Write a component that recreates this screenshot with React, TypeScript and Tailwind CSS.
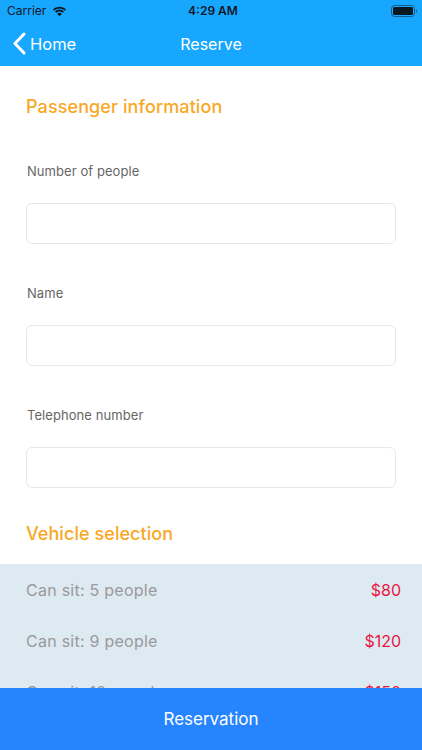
const font = { fontFamily: '"Inter", "Noto Sans", sans-serif' };

function Field({ label, top }: { label: string; top: string }) {
  return (
    <div className={top}>
      <div className="h-[17px] pl-[27px] text-[13px] leading-[17px] tracking-[0.07px] text-[#666666]">{label}</div>
      <div className="mx-[26px] mt-[23px] h-[41px] rounded-[6px] border border-[#e8e8e8] bg-white" />
    </div>
  );
}

function Row({ label, price, className }: { label: string; price: string; className: string }) {
  return (
    <div className={`flex items-center justify-between pl-[26px] pr-[21px] ${className}`}>
      <span className="text-[16px] leading-[20px] tracking-[0.25px] text-[#999999]">{label}</span>
      <span className="text-[16px] leading-[20px] text-[#e8173f]">{price}</span>
    </div>
  );
}

export default function App() {
  return (
    <div className="flex h-[750px] w-[422px] flex-col overflow-hidden bg-white" style={font}>
      <header className="h-[66px] shrink-0 bg-[#17a7ff]">
        <div className="flex h-[22px] items-center justify-between pl-[7px] pr-[5px] text-[#111827]">
          <div className="flex w-[102px] items-center gap-[6px] text-[12px]">
            <span>Carrier</span>
            <svg width="15" height="11" viewBox="0 0 15 11" fill="#0b1720">
              <path d="M7.5 2.6c2 0 3.9.8 5.3 2.1l1.2-1.3C12.3 1.7 10 .7 7.5.7S2.7 1.7 1 3.4l1.2 1.3c1.4-1.3 3.3-2.1 5.3-2.1z" />
              <path d="M7.5 5.5c1.2 0 2.3.4 3.2 1.2l1.2-1.3C10.7 4.3 9.2 3.6 7.5 3.6s-3.2.7-4.4 1.8l1.2 1.3c.9-.8 2-1.2 3.2-1.2z" />
              <path d="M7.5 10.3 9.8 7.7c-.6-.5-1.4-.9-2.3-.9s-1.7.4-2.3.9z" />
            </svg>
          </div>
          <span className="text-[12px] font-semibold">4:29 AM</span>
          <div className="flex w-[100px] justify-end">
            <svg width="26" height="12" viewBox="0 0 26 12">
              <rect x="0.5" y="0.5" width="23" height="11" rx="3" fill="none" stroke="#0b1720" strokeOpacity="0.5" />
              <rect x="2" y="2" width="20" height="8" rx="1.5" fill="#0b1720" />
              <path d="M25 4.2c.6.2 1 .9 1 1.8s-.4 1.6-1 1.8z" fill="#0b1720" fillOpacity="0.5" />
            </svg>
          </div>
        </div>
        <div className="relative flex h-[44px] items-center justify-center text-white">
          <div className="absolute left-[12px] top-[10px] flex items-center gap-[4px]">
            <svg width="14" height="23" viewBox="0 0 14 23" fill="none" stroke="white" strokeWidth="3" strokeLinecap="round" strokeLinejoin="round">
              <path d="M12 2 3 11.5 12 21" />
            </svg>
            <span className="text-[16.5px] leading-[22px]">Home</span>
          </div>
          <span className="text-[16px] leading-[22px]">Reserve</span>
        </div>
      </header>
      <main className="relative min-h-0 flex-1 overflow-hidden">
        <h2 className="mt-[29px] pl-[26px] text-[18px] font-medium leading-[24px] tracking-[0.1px] text-[#f9a825]">Passenger information</h2>
        <Field label="Number of people" top="mt-[44px]" />
        <Field label="Name" top="mt-[41px]" />
        <Field label="Telephone number" top="mt-[41px]" />
        <h2 className="mt-[34px] pl-[26px] text-[18px] font-medium leading-[24px] tracking-[0.06px] text-[#f9a825]">Vehicle selection</h2>
        <div className="mt-[18px] bg-[#deeaf2] pt-[16px]">
          <Row label="Can sit: 5 people" price="$80" className="" />
          <Row label="Can sit: 9 people" price="$120" className="mt-[31px]" />
          <Row label="Can sit: 12 people" price="$150" className="mt-[31px]" />
        </div>
      </main>
      <button className="z-10 h-[62px] shrink-0 bg-[#2784ff] pt-[1px] text-[17px] text-white" style={font}>Reservation</button>
    </div>
  );
}
